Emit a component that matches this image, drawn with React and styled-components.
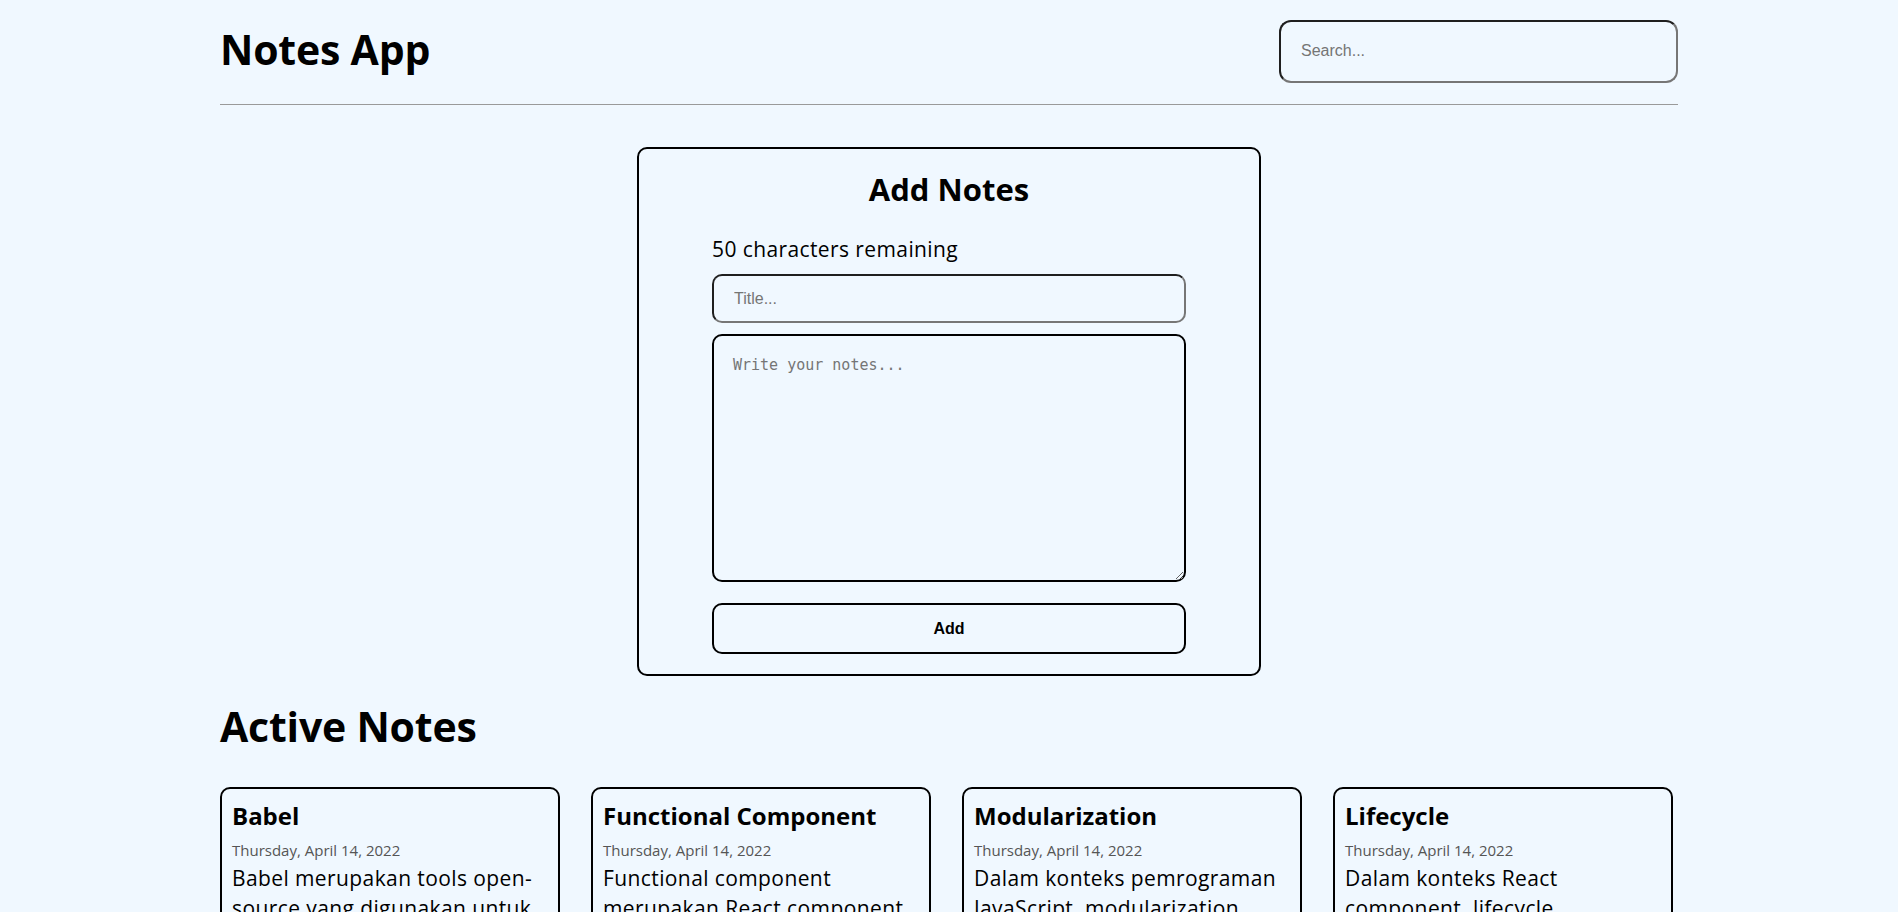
import styled, { createGlobalStyle } from 'styled-components';

const GlobalStyle = createGlobalStyle`
  * {
    box-sizing: border-box;
  }
  body {
    margin: 0;
    background-color: aliceblue;
    font-family: "Open Sans", "Noto Sans", sans-serif;
    color: #000;
  }
`;

const Page = styled.div`
  width: 1458px;
  margin: 0 auto;
`;

const Header = styled.header`
  display: flex;
  justify-content: space-between;
  align-items: center;
  height: 105px;
  padding-bottom: 2px;
  border-bottom: 1px solid #9a9a9a;
`;

const AppTitle = styled.h1`
  margin: 0 0 4px;
  font-size: 41px;
  line-height: 48px;
  font-weight: 700;
  letter-spacing: -0.2px;
`;

const SearchInput = styled.input`
  width: 399px;
  height: 63px;
  padding: 0 20px;
  border-radius: 12px;
  border: 2px solid;
  border-color: #1f1f1f #767676 #767676 #1f1f1f;
  background: transparent;
  font-family: "Liberation Sans", Arial, sans-serif;
  font-size: 16px;
  outline: none;
  &::placeholder {
    color: #757575;
  }
`;

const AddCard = styled.section`
  width: 624px;
  margin: 42px auto 0;
  border: 2px solid #000;
  border-radius: 10px;
  padding: 20px 0 20px;
  display: flex;
  flex-direction: column;
  align-items: center;
`;

const AddTitle = styled.h2`
  margin: 0;
  font-size: 31px;
  line-height: 40px;
  font-weight: 700;
`;

const Form = styled.form`
  width: 474px;
  display: flex;
  flex-direction: column;
  margin-top: 25px;
`;

const Remaining = styled.p`
  margin: 0 0 10px;
  font-size: 21px;
  line-height: 30px;
  letter-spacing: 0.4px;
`;

const TitleInput = styled.input`
  height: 49px;
  padding: 0 20px;
  border-radius: 10px;
  border: 2px solid;
  border-color: #1f1f1f #767676 #767676 #1f1f1f;
  background: transparent;
  font-family: "Liberation Sans", Arial, sans-serif;
  font-size: 16px;
  outline: none;
  &::placeholder {
    color: #757575;
  }
`;

const BodyInput = styled.textarea`
  margin-top: 11px;
  height: 248px;
  padding: 20px 19px;
  border-radius: 10px;
  border: 2px solid #000;
  background: transparent;
  font-family: "DejaVu Sans Mono", monospace;
  font-size: 15px;
  outline: none;
  &::placeholder {
    color: #757575;
  }
`;

const AddButton = styled.button`
  margin-top: 21px;
  height: 51px;
  border: 2px solid #000;
  border-radius: 10px;
  background: transparent;
  font-family: "Liberation Sans", Arial, sans-serif;
  font-size: 16px;
  font-weight: 700;
  color: #000;
  cursor: pointer;
`;

const SectionTitle = styled.h2`
  margin: 22px 0 0;
  font-size: 41px;
  line-height: 56px;
  font-weight: 700;
  letter-spacing: -0.2px;
`;

const NotesGrid = styled.div`
  display: grid;
  grid-template-columns: repeat(4, 340px);
  column-gap: 31px;
  row-gap: 31px;
  margin-top: 33px;
  padding-bottom: 40px;
`;

const NoteCard = styled.article`
  border: 2px solid #000;
  border-radius: 10px;
  padding: 11px 10px 14px;
  display: flex;
  flex-direction: column;
`;

const NoteTitle = styled.h3`
  margin: 0;
  font-size: 24px;
  line-height: 32px;
  font-weight: 700;
`;

const NoteDate = styled.p`
  margin: 8px 0 0;
  font-size: 15px;
  line-height: 20px;
  color: #555;
`;

const NoteBody = styled.p`
  margin: 3px 0 0;
  font-size: 21px;
  line-height: 30px;
  letter-spacing: 0.4px;
`;

const Actions = styled.div`
  display: flex;
  gap: 10px;
  margin-top: 12px;
`;

const ActionButton = styled.button`
  flex: 1;
  height: 40px;
  border: 2px solid ${(p) => (p.$danger ? '#c0392b' : '#000')};
  border-radius: 10px;
  background: transparent;
  color: ${(p) => (p.$danger ? '#c0392b' : '#000')};
  font-family: "Liberation Sans", Arial, sans-serif;
  font-size: 15px;
  font-weight: 700;
`;

const notes = [
  {
    id: 1,
    title: 'Babel',
    body: 'Babel merupakan tools open-source yang digunakan untuk mengubah sintaks ECMAScript 2015+ menjadi sintaks yang didukung oleh JavaScript engine versi lama. Babel sering dipakai ketika kita menggunakan sintaks terbaru termasuk sintaks JSX.',
  },
  {
    id: 2,
    title: 'Functional Component',
    body: 'Functional component merupakan React component yang dibuat menggunakan fungsi JavaScript. Agar fungsi JavaScript dapat disebut component ia harus mengembalikan React element dan dipanggil layaknya React component.',
  },
  {
    id: 3,
    title: 'Modularization',
    body: 'Dalam konteks pemrograman JavaScript, modularization merupakan teknik dalam memecah atau menggunakan kode dalam berkas JavaScript secara terpisah berdasarkan tanggung jawabnya masing-masing.',
  },
  {
    id: 4,
    title: 'Lifecycle',
    body: 'Dalam konteks React component, lifecycle merupakan kumpulan method yang menjadi siklus hidup mulai dari component dibuat (constructor), dicetak (render), pasca-cetak (componentDidMount), dan sebagainya.',
  },
  {
    id: 5,
    title: 'ESM',
    body: 'ESM (ECMAScript Module) merupakan format modularisasi standar JavaScript.',
  },
  {
    id: 6,
    title: 'Module Bundler',
    body: 'Dalam konteks pemrograman JavaScript, module bundler merupakan tools yang digunakan untuk menggabungkan seluruh modul JavaScript yang digunakan oleh aplikasi menjadi satu berkas.',
  },
];

const App = () => {
  return (
    <>
      <GlobalStyle />
      <Page>
        <Header>
          <AppTitle>Notes App</AppTitle>
          <SearchInput type="text" placeholder="Search..." />
        </Header>

        <AddCard>
          <AddTitle>Add Notes</AddTitle>
          <Form onSubmit={(e) => e.preventDefault()}>
            <Remaining>50 characters remaining</Remaining>
            <TitleInput type="text" placeholder="Title..." />
            <BodyInput placeholder="Write your notes..." />
            <AddButton type="submit">Add</AddButton>
          </Form>
        </AddCard>

        <SectionTitle>Active Notes</SectionTitle>
        <NotesGrid>
          {notes.map((note) => (
            <NoteCard key={note.id}>
              <NoteTitle>{note.title}</NoteTitle>
              <NoteDate>Thursday, April 14, 2022</NoteDate>
              <NoteBody>{note.body}</NoteBody>
              <Actions>
                <ActionButton $danger>Delete</ActionButton>
                <ActionButton>Archive</ActionButton>
              </Actions>
            </NoteCard>
          ))}
        </NotesGrid>
      </Page>
    </>
  );
};

export default App;
